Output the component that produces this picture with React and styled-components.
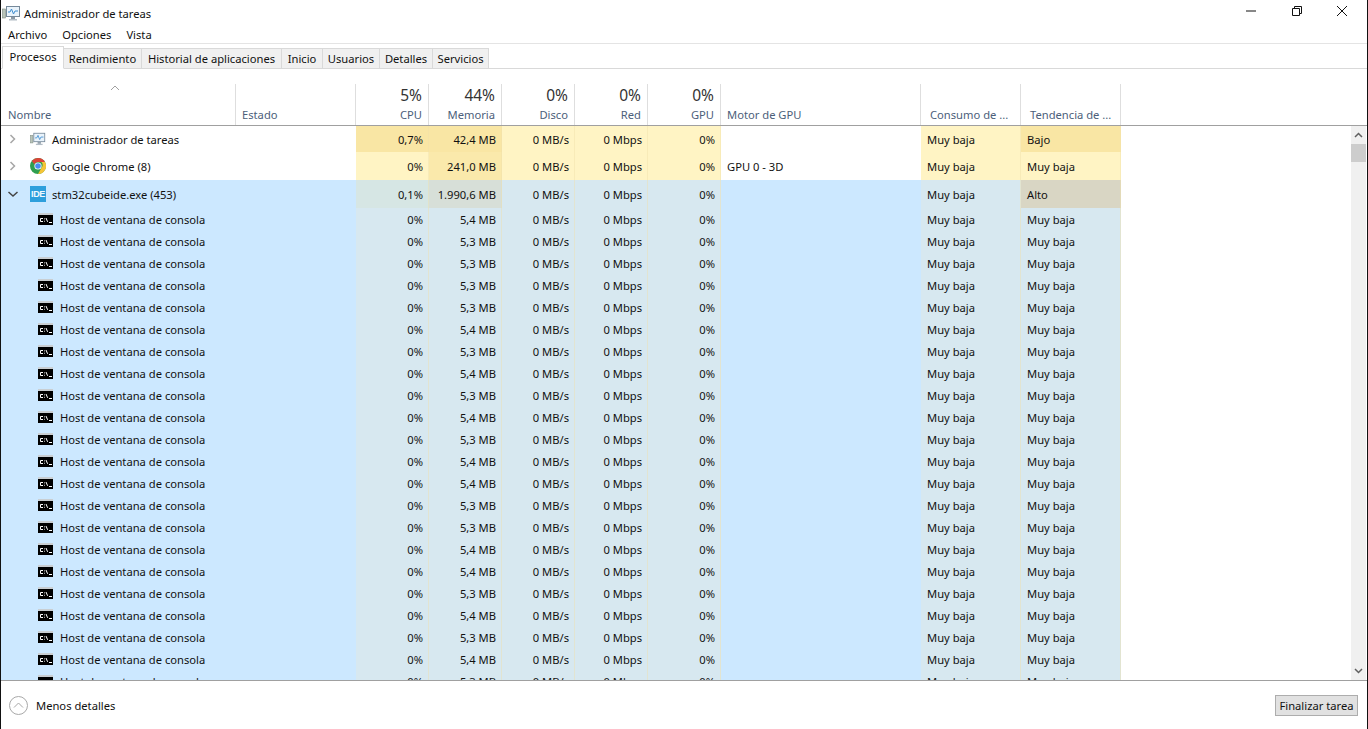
import React from "react";
import styled, { createGlobalStyle } from "styled-components";

const COLUMNS = "235px 120px 73px 73px 73px 73px 73px 200px 100px 100px";

const GlobalStyle = createGlobalStyle`
  html, body { margin: 0; padding: 0; background: #fff; overflow: hidden; }
  body { font-family: "Noto Sans", "Open Sans", sans-serif; font-size: 11.2px; color: #111; }
`;

const Window = styled.div`
  height: 729px;
  width: 1368px;
  box-sizing: border-box;
  border-left: 1px solid #111;
  border-right: 1px solid #111;
  display: flex;
  flex-direction: column;
  overflow: hidden;
`;

const TitleBar = styled.div`
  height: 26px;
  display: flex;
  align-items: center;
  padding-left: 1px;
  gap: 3px;
`;

const TitleText = styled.span`
  flex: 1;
`;

const WindowButtons = styled.div`
  display: flex;
  align-items: center;
  margin-top: -4px;
  margin-right: 2px;
`;

const WindowButton = styled.div`
  width: 45.5px;
  display: flex;
  justify-content: center;
`;

const MenuBar = styled.div`
  height: 18px;
  box-sizing: border-box;
  display: flex;
  align-items: center;
  gap: 15px;
  padding: 0 0 1px 7px;
  border-bottom: 1px solid #e4e4e4;
`;

const TabBar = styled.div`
  height: 25px;
  box-sizing: border-box;
  display: flex;
  align-items: flex-end;
  padding-left: 1px;
  border-bottom: 1px solid #d9d9d9;
`;

const Tab = styled.div`
  box-sizing: border-box;
  width: ${(p) => p.$width}px;
  height: ${(p) => (p.$active ? 23 : 20)}px;
  margin-bottom: ${(p) => (p.$active ? -1 : 0)}px;
  margin-right: -1px;
  display: flex;
  align-items: center;
  justify-content: center;
  padding-bottom: ${(p) => (p.$active ? 2 : 0)}px;
  background: ${(p) => (p.$active ? "#fff" : "#f0f0f0")};
  border: 1px solid #d9d9d9;
  border-bottom: ${(p) => (p.$active ? "1px solid #fff" : "none")};
  position: relative;
  z-index: ${(p) => (p.$active ? 1 : 0)};
`;

const HeaderRow = styled.div`
  margin-top: 15px;
  height: 42px;
  box-sizing: border-box;
  display: grid;
  grid-template-columns: ${COLUMNS};
  border-bottom: 1px solid #a0a0a0;
`;

const HeaderCell = styled.div`
  box-sizing: border-box;
  border-right: 1px solid #dedede;
  padding: 0 6px 2px ${(p) => p.$inset || 6}px;
  display: flex;
  flex-direction: column;
  justify-content: flex-end;
  align-items: ${(p) => (p.$right ? "flex-end" : "flex-start")};
  color: #4c607a;
  white-space: nowrap;
  position: relative;
`;

const Total = styled.div`
  font-size: 15.5px;
  line-height: 20px;
  margin-bottom: 1px;
  color: #333;
`;

const Label = styled.div`
  line-height: 17px;
`;

const SortCaret = styled.svg`
  position: absolute;
  top: 1px;
  left: 109px;
`;

const TableBody = styled.div`
  height: 555px;
  box-sizing: border-box;
  display: flex;
  border-bottom: 1px solid #a0a0a0;
`;

const List = styled.div`
  flex: 1;
  overflow: hidden;
`;

const Row = styled.div`
  display: grid;
  grid-template-columns: ${COLUMNS};
  height: ${(p) => p.$height}px;
  width: 1120px;
  background: ${(p) => (p.$selected ? "#cce8ff" : "#fff")};
`;

const Cell = styled.div`
  box-sizing: border-box;
  display: flex;
  align-items: center;
  justify-content: ${(p) => (p.$right ? "flex-end" : "flex-start")};
  padding: 0 6px;
  white-space: nowrap;
  background: ${(p) => p.$bg || "transparent"};
  box-shadow: ${(p) => (p.$bg ? "inset -1px 0 0 rgba(240, 225, 170, 0.45)" : "none")};
`;

const NameCell = styled(Cell)`
  padding-left: ${(p) => (p.$child ? 37 : 6)}px;
  grid-column: span 2;
  gap: ${(p) => (p.$child ? 7 : 6)}px;
`;

const Chevron = styled.svg`
  flex: none;
  width: 12px;
  margin-right: 5px;
`;

const IdeIcon = styled.div`
  width: 16px;
  height: 16px;
  flex: none;
  background: #2d9fdc;
  color: #f2faff;
  font-family: "Liberation Sans", sans-serif;
  font-size: 9px;
  font-weight: 700;
  display: flex;
  align-items: center;
  justify-content: center;
  letter-spacing: -0.3px;
`;

const ScrollBar = styled.div`
  width: 15px;
  margin-right: 1px;
  background: #f0f0f0;
  display: flex;
  flex-direction: column;
  align-items: center;
`;

const ScrollButton = styled.div`
  height: 18px;
  display: flex;
  align-items: center;
  justify-content: center;
`;

const ScrollThumb = styled.div`
  width: 15px;
  height: 18px;
  background: #cdcdcd;
  margin-bottom: auto;
`;

const Footer = styled.div`
  flex: 1;
  display: flex;
  align-items: center;
  padding: 0 9px 0 8px;
`;

const Details = styled.div`
  flex: 1;
  display: flex;
  align-items: center;
  gap: 8px;
`;

const EndTask = styled.div`
  width: 83px;
  height: 21px;
  box-sizing: border-box;
  background: #e1e1e1;
  border: 1px solid #adadad;
  display: flex;
  align-items: center;
  justify-content: center;
`;

const Y = "#fff4c4";
const Y2 = "#f9e6a4";
const Y3 = "#fae9ab";
const B = "#d7e8f0";

const TaskManagerIcon = ({ size = 19 }) => (
  <svg width={size} height={size * 17 / 19} viewBox="0 0 19 17" style={{ flex: "none" }}>
    <rect x="0.5" y="4" width="3" height="9" fill="#b9c4b9" stroke="#7d8a80" strokeWidth="0.6" />
    <rect x="4.5" y="1.5" width="13" height="10" fill="#e9f3fb" stroke="#76899a" />
    <path d="M6 7h2l1.5-3 2 5 1.5-3h3" fill="none" stroke="#3f8ed0" strokeWidth="1" />
    <rect x="9" y="12" width="4" height="2" fill="#8b99a5" />
    <rect x="7" y="14" width="8" height="1.5" fill="#b3bdc6" />
  </svg>
);

const ChromeIcon = () => (
  <svg width="16" height="16" viewBox="0 0 16 16">
    <circle cx="8" cy="8" r="8" fill="#2f9e4f" />
    <path d="M8 0a8 8 0 0 1 7 4H8a4 4 0 0 0-3.6 2.3L1.8 3A8 8 0 0 1 8 0z" fill="#dc4337" />
    <path d="M15 4a8 8 0 0 1-7 12l3.4-6a4 4 0 0 0-.1-6z" fill="#f6c437" />
    <circle cx="8" cy="8" r="3.6" fill="#fff" />
    <circle cx="8" cy="8" r="2.8" fill="#4a8bf0" />
  </svg>
);

const ConsoleIcon = () => (
  <svg width="15" height="12" viewBox="0 0 15 12" style={{ flex: "none" }}>
    <rect x="0" y="0" width="15" height="12" fill="#000" />
    <rect x="0" y="0" width="15" height="2" fill="#c9ced2" />
    <path d="M5 5.5H2.5v3H5M6.5 5.5v.8M6.5 7.8v.8M8 5l1.6 3.8M11 9.5h3" fill="none" stroke="#fff" strokeWidth="1" />
  </svg>
);

const ChevronRight = () => (
  <Chevron height="12" viewBox="0 0 12 12">
    <path d="M3.5 2l4 4-4 4" fill="none" stroke="#a6a6a6" strokeWidth="1.5" />
  </Chevron>
);

const ChevronDown = () => (
  <Chevron height="12" viewBox="0 0 12 12">
    <path d="M1.5 4l4.5 4 4.5-4" fill="none" stroke="#444" strokeWidth="1.5" />
  </Chevron>
);

const headers = [
  { label: "Nombre", inset: 7 },
  { label: "Estado" },
  { total: "5%", label: "CPU", right: true },
  { total: "44%", label: "Memoria", right: true },
  { total: "0%", label: "Disco", right: true },
  { total: "0%", label: "Red", right: true },
  { total: "0%", label: "GPU", right: true },
  { label: "Motor de GPU" },
  { label: "Consumo de ...", inset: 9 },
  { label: "Tendencia de ...", inset: 9 },
];

const tabs = [
  ["Procesos", 62],
  ["Rendimiento", 79],
  ["Historial de aplicaciones", 141],
  ["Inicio", 42],
  ["Usuarios", 58],
  ["Detalles", 54],
  ["Servicios", 57],
];

const memory = [
  "5,4", "5,3", "5,3", "5,3", "5,3", "5,4", "5,3", "5,4", "5,3", "5,4", "5,3",
  "5,4", "5,4", "5,3", "5,3", "5,4", "5,4", "5,3", "5,4", "5,3", "5,4", "5,3",
];

const Metrics = ({ cpu, mem, cpuBg, memBg, bg, engine, power, trend, trendBg }) => (
  <>
    <Cell $right $bg={cpuBg}>{cpu}</Cell>
    <Cell $right $bg={memBg}>{mem} MB</Cell>
    <Cell $right $bg={bg}>0 MB/s</Cell>
    <Cell $right $bg={bg}>0 Mbps</Cell>
    <Cell $right $bg={bg}>0%</Cell>
    <Cell>{engine}</Cell>
    <Cell $bg={bg}>{power}</Cell>
    <Cell $bg={trendBg || bg}>{trend}</Cell>
  </>
);

export default function App() {
  return (
    <Window>
      <GlobalStyle />
      <TitleBar>
        <TaskManagerIcon />
        <TitleText>Administrador de tareas</TitleText>
        <WindowButtons>
          <WindowButton>
            <svg width="10" height="10" viewBox="0 0 10 10"><path d="M0 5h10" stroke="#111" /></svg>
          </WindowButton>
          <WindowButton>
            <svg width="10" height="10" viewBox="0 0 10 10">
              <path d="M2.5 2.5V.5h7v7h-2M.5 2.5h7v7h-7z" fill="none" stroke="#111" />
            </svg>
          </WindowButton>
          <WindowButton>
            <svg width="10" height="10" viewBox="0 0 10 10"><path d="M0 0l10 10M10 0L0 10" stroke="#111" /></svg>
          </WindowButton>
        </WindowButtons>
      </TitleBar>
      <MenuBar>
        <span>Archivo</span>
        <span>Opciones</span>
        <span>Vista</span>
      </MenuBar>
      <TabBar>
        {tabs.map(([name, width], i) => (
          <Tab key={name} $width={width} $active={i === 0}>{name}</Tab>
        ))}
      </TabBar>
      <HeaderRow>
        {headers.map((h, i) => (
          <HeaderCell key={h.label} $right={h.right} $inset={h.inset}>
            {i === 0 && (
              <SortCaret width="10" height="6" viewBox="0 0 10 6">
                <path d="M1 5l4-4 4 4" fill="none" stroke="#a0a0a0" />
              </SortCaret>
            )}
            {h.total && <Total>{h.total}</Total>}
            <Label>{h.label}</Label>
          </HeaderCell>
        ))}
      </HeaderRow>
      <TableBody>
        <List>
          <Row $height={26}>
            <NameCell>
              <ChevronRight />
              <TaskManagerIcon size={16} />
              <span>Administrador de tareas</span>
            </NameCell>
            <Metrics cpu="0,7%" mem="42,4" cpuBg={Y2} memBg={Y2} bg={Y} power="Muy baja" trend="Bajo" trendBg={Y2} />
          </Row>
          <Row $height={28}>
            <NameCell>
              <ChevronRight />
              <ChromeIcon />
              <span>Google Chrome (8)</span>
            </NameCell>
            <Metrics cpu="0%" mem="241,0" cpuBg={Y} memBg={Y3} bg={Y} engine="GPU 0 - 3D" power="Muy baja" trend="Muy baja" />
          </Row>
          <Row $height={28} $selected>
            <NameCell>
              <ChevronDown />
              <IdeIcon>IDE</IdeIcon>
              <span>stm32cubeide.exe (453)</span>
            </NameCell>
            <Metrics cpu="0,1%" mem="1.990,6" cpuBg="#d6e6e4" memBg="#d7dfd8" bg={B} power="Muy baja" trend="Alto" trendBg="#d9d6c4" />
          </Row>
          {memory.map((mem, i) => (
            <Row key={i} $height={22} $selected>
              <NameCell $child>
                <ConsoleIcon />
                <span>Host de ventana de consola</span>
              </NameCell>
              <Metrics cpu="0%" mem={mem} cpuBg={B} memBg={B} bg={B} power="Muy baja" trend="Muy baja" />
            </Row>
          ))}
        </List>
        <ScrollBar>
          <ScrollButton>
            <svg width="9" height="6" viewBox="0 0 9 6"><path d="M1 5l3.5-3.5L8 5" fill="none" stroke="#606060" strokeWidth="1.5" /></svg>
          </ScrollButton>
          <ScrollThumb />
          <ScrollButton>
            <svg width="9" height="6" viewBox="0 0 9 6"><path d="M1 1l3.5 3.5L8 1" fill="none" stroke="#606060" strokeWidth="1.5" /></svg>
          </ScrollButton>
        </ScrollBar>
      </TableBody>
      <Footer>
        <Details>
          <svg width="19" height="19" viewBox="0 0 19 19">
            <circle cx="9.5" cy="9.5" r="9" fill="none" stroke="#a8a8a8" />
            <path d="M5 11.5l4.5-4.5 4.5 4.5" fill="none" stroke="#a8a8a8" />
          </svg>
          <span>Menos detalles</span>
        </Details>
        <EndTask>Finalizar tarea</EndTask>
      </Footer>
    </Window>
  );
}
